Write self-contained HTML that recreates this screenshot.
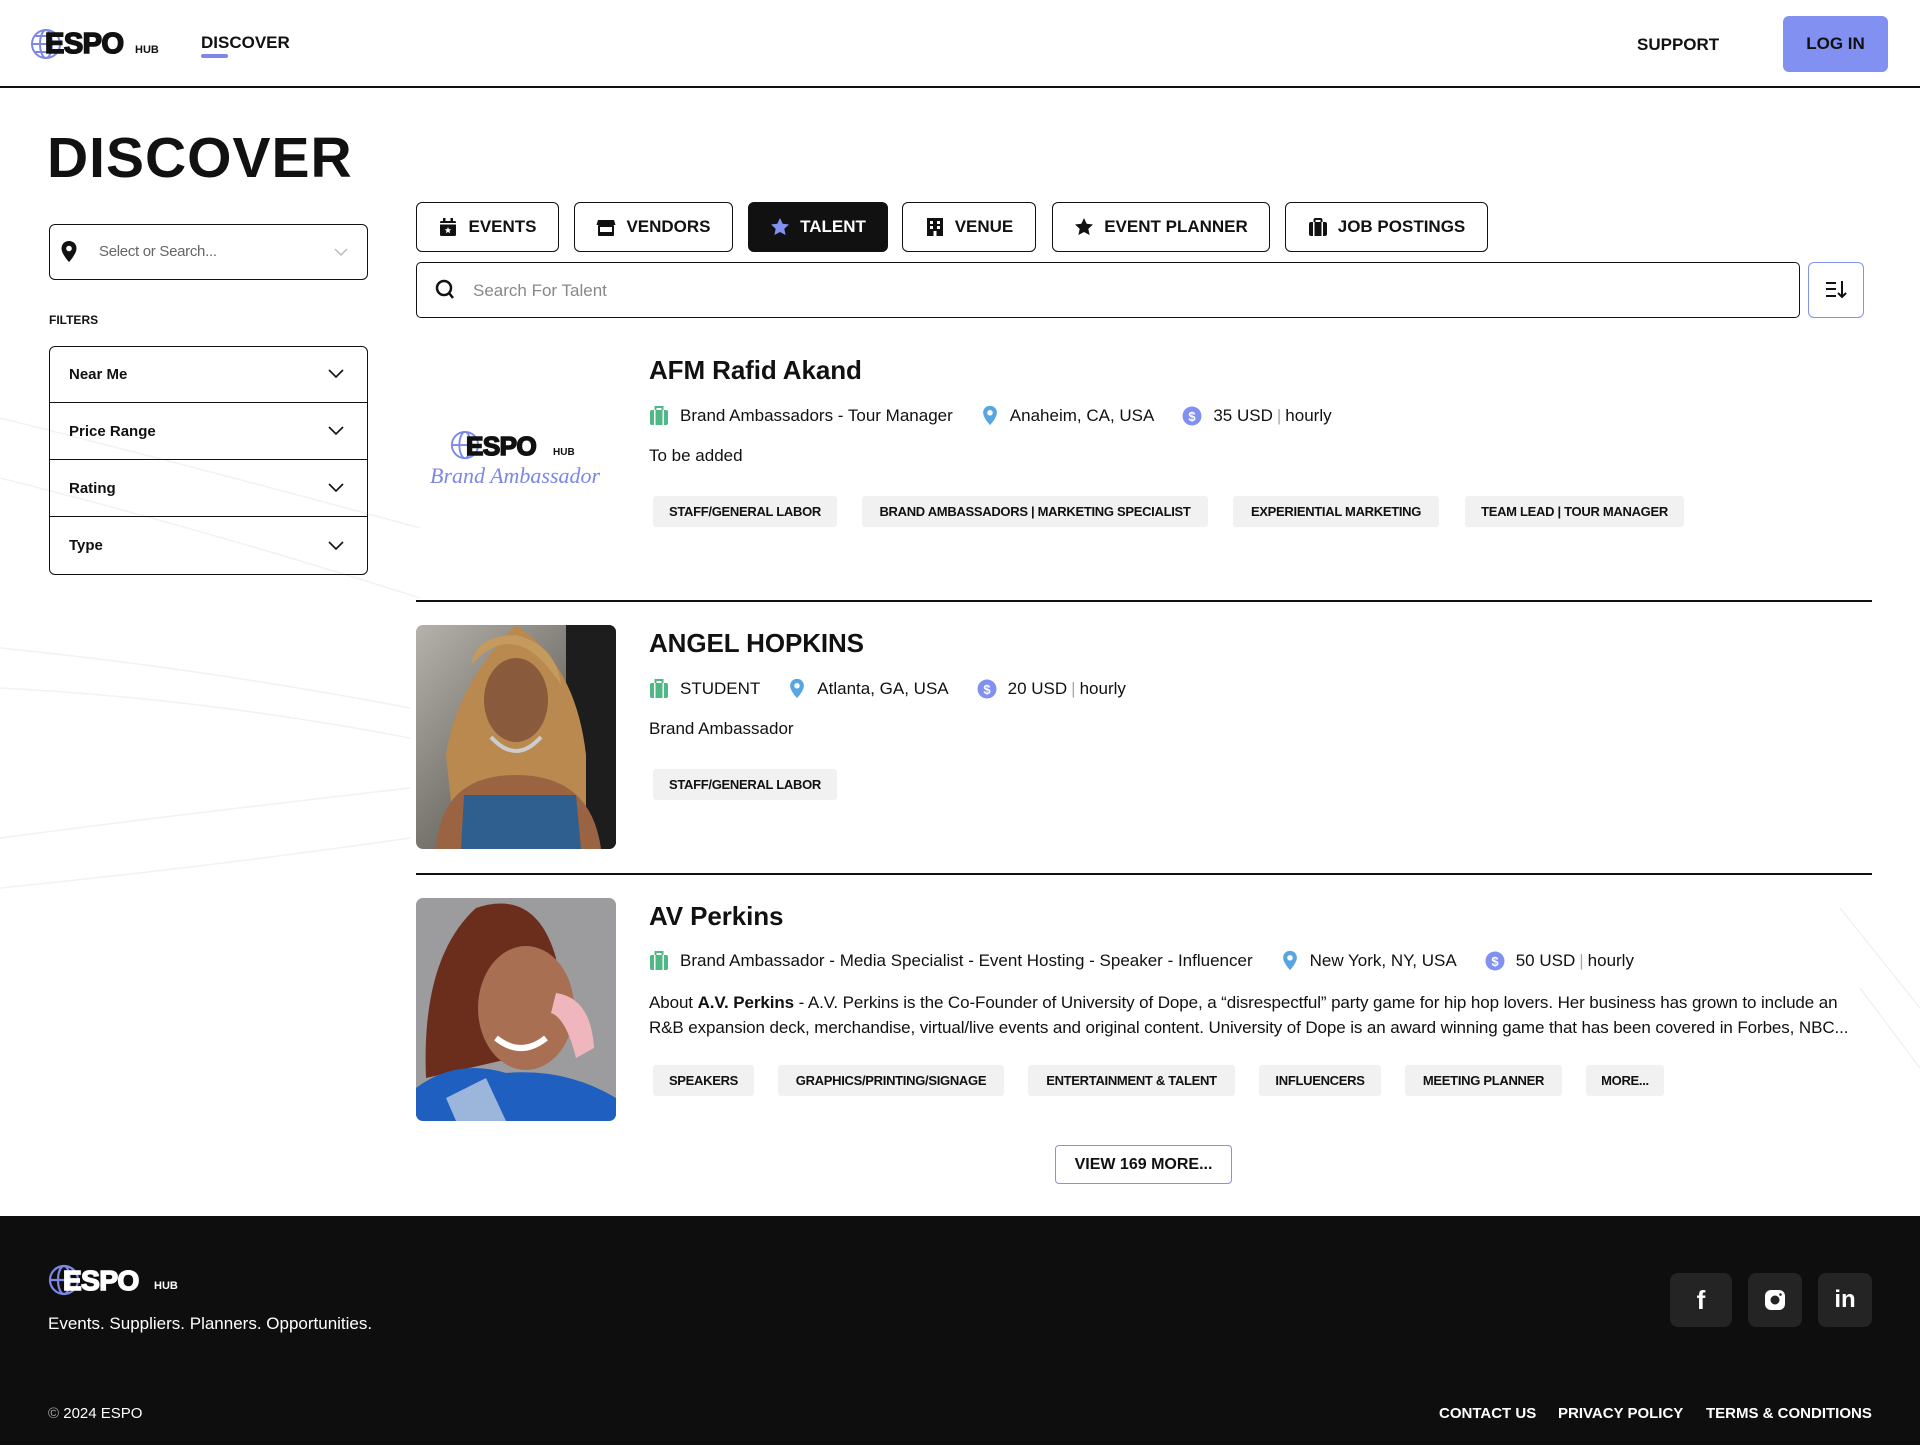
<!DOCTYPE html>
<html><head><meta charset="utf-8"><style>
*{box-sizing:border-box;margin:0;padding:0}
body{width:1920px;height:1446px;position:relative;background:#fff;font-family:"Liberation Sans",sans-serif;color:#111;overflow:hidden}
.a{position:absolute}
.b{font-weight:bold}
.tab{position:absolute;top:202px;height:50px;border:1.5px solid #111;border-radius:6px;display:flex;align-items:center;justify-content:center;gap:10px;font-weight:bold;font-size:17px;background:#fff}
.tab svg{width:20px;height:20px}
.frow{position:absolute;left:49px;width:319px;height:57px;border-bottom:1.5px solid #111;display:flex;align-items:center;justify-content:space-between;padding:0 24px 0 20px;font-weight:bold;font-size:15px}
.name{position:absolute;left:649px;font-size:26px;font-weight:bold;letter-spacing:-0.1px}
.meta{position:absolute;left:649px;font-size:17px;display:flex;align-items:center;white-space:nowrap;letter-spacing:0}
.meta svg{margin-right:11px}
.meta .g{margin-right:28px}
.sep{color:#aaa;margin:0 4px}
.desc{position:absolute;left:649px;font-size:17px}
.tag{position:absolute;height:31px;background:#f1f1f1;border-radius:3px;font-size:13px;font-weight:bold;display:flex;align-items:center;justify-content:center;letter-spacing:-0.3px;white-space:nowrap}
.hr{position:absolute;left:416px;width:1456px;height:1.5px;background:#111}
.photo{position:absolute;left:416px;width:200px;border-radius:7px;overflow:hidden}
.soc{position:absolute;top:1273px;height:54px;background:#242424;border-radius:8px;display:flex;align-items:center;justify-content:center;color:#fff;font-weight:bold;font-size:26px}
.fl{position:absolute;top:1405px;color:#fff;font-weight:bold;font-size:15px}
.logo{-webkit-text-stroke:1.6px currentColor;letter-spacing:-0.5px}
</style></head><body>
<svg class="a" style="left:0;top:88px" width="1920" height="1128"><g stroke="#f2f2f2" stroke-width="1.5" fill="none">
<path d="M0 330 Q200 380 420 440"/><path d="M0 390 Q200 440 420 510"/><path d="M0 560 Q200 580 410 620"/><path d="M0 600 Q200 610 410 650"/><path d="M0 750 Q150 730 410 700"/><path d="M0 800 Q200 780 410 750"/><path d="M1840 820 L1920 920"/><path d="M1860 900 L1920 980"/></g></svg>
<!-- header -->
<svg class="a" style="left:30px;top:28px" width="32" height="32" viewBox="0 0 32 32"><g fill="none" stroke="#7c87e8" stroke-width="2"><circle cx="16" cy="16" r="14"/><ellipse cx="16" cy="16" rx="6" ry="14"/><path d="M2 16h28M5 8h22M5 24h22"/></g></svg>
<div class="a b logo" style="left:45px;top:28px;font-size:29px">ESPO</div>
<div class="a b" style="left:135px;top:44px;font-size:11px">HUB</div>
<div class="a b" style="left:201px;top:33px;font-size:17px">DISCOVER</div>
<div class="a" style="left:201px;top:54px;width:27px;height:4px;border-radius:2px;background:#7c87e8"></div>
<div class="a b" style="left:1637px;top:35px;font-size:17px">SUPPORT</div>
<div class="a b" style="left:1783px;top:16px;width:105px;height:56px;background:#8290f2;border-radius:6px;display:flex;align-items:center;justify-content:center;font-size:17px">LOG IN</div>
<div class="a" style="left:0;top:86px;width:1920px;height:1.5px;background:#111"></div>
<!-- left -->
<div class="a b" style="left:47px;top:125px;font-size:57px;letter-spacing:1px">DISCOVER</div>
<div class="a" style="left:49px;top:224px;width:319px;height:56px;border:1.5px solid #111;border-radius:6px"></div>
<svg class="a" style="left:60px;top:240px" width="18" height="24" viewBox="0 0 18 24"><path d="M9 1C4.5 1 1.5 4.3 1.5 8.5 1.5 14 9 22 9 22s7.5-8 7.5-13.5C16.5 4.3 13.5 1 9 1z" fill="#111"/><circle cx="9" cy="8.5" r="2.8" fill="#fff"/></svg>
<div class="a" style="left:99px;top:243px;font-size:15px;color:#666;letter-spacing:-0.3px">Select or Search...</div>
<svg class="a" style="left:334px;top:247px" width="14" height="10"><path d="M1 2l6 6 6-6" stroke="#bbb" stroke-width="1.5" fill="none"/></svg>
<div class="a b" style="left:49px;top:313px;font-size:12px">FILTERS</div>
<div class="a" style="left:49px;top:346px;width:319px;height:229px;border:1.5px solid #111;border-radius:6px"></div>
<div class="frow" style="top:346px">Near Me<svg width="16" height="10"><path d="M1 1l7 7 7-7" stroke="#111" stroke-width="1.6" fill="none"/></svg></div>
<div class="frow" style="top:403px">Price Range<svg width="16" height="10"><path d="M1 1l7 7 7-7" stroke="#111" stroke-width="1.6" fill="none"/></svg></div>
<div class="frow" style="top:460px">Rating<svg width="16" height="10"><path d="M1 1l7 7 7-7" stroke="#111" stroke-width="1.6" fill="none"/></svg></div>
<div class="frow" style="top:517px;border-bottom:none">Type<svg width="16" height="10"><path d="M1 1l7 7 7-7" stroke="#111" stroke-width="1.6" fill="none"/></svg></div>
<!-- tabs -->
<div class="tab" style="left:416px;width:143px"><svg viewBox="0 0 20 20"><rect x="2" y="4" width="16" height="15" rx="1.5" fill="#111"/><rect x="5" y="1" width="2.5" height="4" fill="#111"/><rect x="12.5" y="1" width="2.5" height="4" fill="#111"/><rect x="2" y="6" width="16" height="1.5" fill="#fff"/><path d="M10 10l1 2.2 2.3.2-1.8 1.5.6 2.3-2.1-1.3-2.1 1.3.6-2.3-1.8-1.5 2.3-.2z" fill="#fff"/></svg>EVENTS</div>
<div class="tab" style="left:574px;width:159px"><svg viewBox="0 0 20 20"><path d="M2 3h16l1.5 5H.5z" fill="#111"/><rect x="2" y="8" width="16" height="11" rx="1" fill="#111"/><rect x="4" y="10" width="12" height="5" fill="#fff"/></svg>VENDORS</div>
<div class="tab" style="left:748px;width:140px;background:#111;color:#fff;border-color:#111"><svg viewBox="0 0 20 20"><path d="M10 1l2.7 5.8 6.3.7-4.7 4.3 1.3 6.2L10 15l-5.6 3 1.3-6.2L1 7.5l6.3-.7z" fill="#8290f2"/></svg>TALENT</div>
<div class="tab" style="left:902px;width:134px"><svg viewBox="0 0 20 20"><rect x="2" y="1" width="16" height="18" fill="#111"/><g fill="#fff"><rect x="5" y="4" width="3" height="3"/><rect x="12" y="4" width="3" height="3"/><rect x="5" y="9" width="3" height="3"/><rect x="12" y="9" width="3" height="3"/><rect x="8.5" y="14" width="3" height="5"/></g></svg>VENUE</div>
<div class="tab" style="left:1052px;width:218px"><svg viewBox="0 0 20 20"><path d="M10 1l2.7 5.8 6.3.7-4.7 4.3 1.3 6.2L10 15l-5.6 3 1.3-6.2L1 7.5l6.3-.7z" fill="#111"/></svg>EVENT PLANNER</div>
<div class="tab" style="left:1285px;width:203px"><svg viewBox="0 0 20 20"><rect x="1" y="5" width="18" height="14" rx="2" fill="#111"/><rect x="6.5" y="2" width="7" height="4" rx="1" fill="none" stroke="#111" stroke-width="2"/><rect x="5" y="5" width="1.5" height="14" fill="#fff"/><rect x="13.5" y="5" width="1.5" height="14" fill="#fff"/></svg>JOB POSTINGS</div>
<!-- search -->
<div class="a" style="left:416px;top:262px;width:1384px;height:56px;border:1.5px solid #111;border-radius:5px"></div>
<svg class="a" style="left:435px;top:279px" width="22" height="22"><circle cx="9" cy="9" r="7" stroke="#111" stroke-width="2.5" fill="none"/><path d="M14 14l4 5" stroke="#111" stroke-width="2.5"/></svg>
<div class="a" style="left:473px;top:281px;font-size:17px;color:#888">Search For Talent</div>
<div class="a" style="left:1808px;top:262px;width:56px;height:56px;border:1.5px solid #8290f2;border-radius:6px"></div>
<svg class="a" style="left:1825px;top:280px" width="24" height="20"><g stroke="#111" stroke-width="2"><path d="M1 3h10M1 9h10M1 16h10"/><path d="M17 1v16M13 13l4 4 4-4" fill="none"/></g></svg>
<!-- card1 -->
<svg class="a" style="left:450px;top:430px" width="30" height="30" viewBox="0 0 32 32"><g fill="none" stroke="#7c87e8" stroke-width="2"><circle cx="16" cy="16" r="14"/><ellipse cx="16" cy="16" rx="6" ry="14"/><path d="M2 16h28"/></g></svg>
<div class="a b logo" style="left:466px;top:431px;font-size:26px">ESPO</div>
<div class="a b" style="left:553px;top:447px;font-size:10px">HUB</div>
<div class="a" style="left:430px;top:463px;font-size:22px;color:#7c87e8;font-style:italic;font-family:'Liberation Serif',serif">Brand Ambassador</div>
<div class="name" style="top:355px">AFM Rafid Akand</div>
<div class="meta" style="top:405px"><svg width="20" height="20" viewBox="0 0 20 20"><rect x="1" y="4" width="18" height="15" rx="2" fill="#4fb886"/><rect x="6.5" y="1" width="7" height="4" fill="none" stroke="#4fb886" stroke-width="2"/><rect x="5" y="4" width="1.5" height="15" fill="#fff"/><rect x="13.5" y="4" width="1.5" height="15" fill="#fff"/></svg><span class="g">Brand Ambassadors - Tour Manager</span><svg width="18" height="22" viewBox="0 0 18 24"><path d="M9 1C4.5 1 1.5 4.3 1.5 8.5 1.5 14 9 22 9 22s7.5-8 7.5-13.5C16.5 4.3 13.5 1 9 1z" fill="#58a6e0"/><circle cx="9" cy="8.5" r="3" fill="#fff"/></svg><span class="g">Anaheim, CA, USA</span><svg width="20" height="20"><circle cx="10" cy="10" r="9.5" fill="#8290f2"/><text x="10" y="15" fill="#fff" font-size="13" font-weight="bold" text-anchor="middle" font-family="Liberation Sans">$</text></svg><span>35 USD<span class="sep">|</span>hourly</span></div>
<div class="desc" style="top:446px">To be added</div>
<div class="tag" style="left:653px;top:496px;width:184px">STAFF/GENERAL LABOR</div>
<div class="tag" style="left:862px;top:496px;width:346px">BRAND AMBASSADORS | MARKETING SPECIALIST</div>
<div class="tag" style="left:1233px;top:496px;width:206px">EXPERIENTIAL MARKETING</div>
<div class="tag" style="left:1465px;top:496px;width:219px">TEAM LEAD | TOUR MANAGER</div>
<div class="hr" style="top:600px"></div>
<!-- card2 -->
<svg class="photo" style="top:625px" width="200" height="224" viewBox="0 0 200 224"><defs><linearGradient id="bg2" x1="0" y1="0" x2="1" y2="1"><stop offset="0" stop-color="#b5b2ab"/><stop offset=".6" stop-color="#6d6a64"/><stop offset="1" stop-color="#222"/></linearGradient></defs><rect width="200" height="224" fill="url(#bg2)"/><rect x="150" y="0" width="50" height="224" fill="#1d1d1d"/><path d="M40 224 L30 130 Q40 60 100 0 Q160 40 170 130 L170 224z" fill="#b9894f"/><path d="M20 224 Q25 150 100 150 Q175 150 185 224z" fill="#9a6443"/><ellipse cx="100" cy="75" rx="32" ry="42" fill="#8a5a3c"/><path d="M48 170 H160 L165 224 H45z" fill="#2f5f8f"/><path d="M75 112 Q100 140 125 112" stroke="#ccc" stroke-width="4" fill="none"/><path d="M55 40 Q100 -10 145 60 Q140 20 100 10 Q60 10 55 40z" fill="#c49a5e"/></svg>
<div class="name" style="top:628px">ANGEL HOPKINS</div>
<div class="meta" style="top:678px"><svg width="20" height="20" viewBox="0 0 20 20"><rect x="1" y="4" width="18" height="15" rx="2" fill="#4fb886"/><rect x="6.5" y="1" width="7" height="4" fill="none" stroke="#4fb886" stroke-width="2"/><rect x="5" y="4" width="1.5" height="15" fill="#fff"/><rect x="13.5" y="4" width="1.5" height="15" fill="#fff"/></svg><span class="g">STUDENT</span><svg width="18" height="22" viewBox="0 0 18 24"><path d="M9 1C4.5 1 1.5 4.3 1.5 8.5 1.5 14 9 22 9 22s7.5-8 7.5-13.5C16.5 4.3 13.5 1 9 1z" fill="#58a6e0"/><circle cx="9" cy="8.5" r="3" fill="#fff"/></svg><span class="g">Atlanta, GA, USA</span><svg width="20" height="20"><circle cx="10" cy="10" r="9.5" fill="#8290f2"/><text x="10" y="15" fill="#fff" font-size="13" font-weight="bold" text-anchor="middle" font-family="Liberation Sans">$</text></svg><span>20 USD<span class="sep">|</span>hourly</span></div>
<div class="desc" style="top:719px">Brand Ambassador</div>
<div class="tag" style="left:653px;top:769px;width:184px">STAFF/GENERAL LABOR</div>
<div class="hr" style="top:873px"></div>
<!-- card3 -->
<svg class="photo" style="top:898px" width="200" height="223" viewBox="0 0 200 223"><rect width="200" height="223" fill="#9c9c9e"/><path d="M10 180 Q5 60 60 10 Q120 -10 140 60 L140 150 Z" fill="#6b2e1c"/><ellipse cx="110" cy="110" rx="48" ry="62" fill="#a86f52"/><path d="M0 223 L0 190 Q40 160 90 175 Q150 170 200 200 L200 223z" fill="#1e5fbf"/><path d="M30 200 L70 180 L90 223 L40 223z" fill="#eee" opacity=".6"/><path d="M140 95 Q175 100 178 150 L160 160 Q150 120 135 115z" fill="#f0b6bd"/><path d="M80 140 Q105 160 130 140" stroke="#fff" stroke-width="6" fill="none"/></svg>
<div class="name" style="top:901px">AV Perkins</div>
<div class="meta" style="top:950px"><svg width="20" height="20" viewBox="0 0 20 20"><rect x="1" y="4" width="18" height="15" rx="2" fill="#4fb886"/><rect x="6.5" y="1" width="7" height="4" fill="none" stroke="#4fb886" stroke-width="2"/><rect x="5" y="4" width="1.5" height="15" fill="#fff"/><rect x="13.5" y="4" width="1.5" height="15" fill="#fff"/></svg><span class="g">Brand Ambassador - Media Specialist - Event Hosting - Speaker - Influencer</span><svg width="18" height="22" viewBox="0 0 18 24"><path d="M9 1C4.5 1 1.5 4.3 1.5 8.5 1.5 14 9 22 9 22s7.5-8 7.5-13.5C16.5 4.3 13.5 1 9 1z" fill="#58a6e0"/><circle cx="9" cy="8.5" r="3" fill="#fff"/></svg><span class="g">New York, NY, USA</span><svg width="20" height="20"><circle cx="10" cy="10" r="9.5" fill="#8290f2"/><text x="10" y="15" fill="#fff" font-size="13" font-weight="bold" text-anchor="middle" font-family="Liberation Sans">$</text></svg><span>50 USD<span class="sep">|</span>hourly</span></div>
<div class="desc" style="top:990px;width:1225px;line-height:25px;font-size:17px;letter-spacing:-0.1px;white-space:nowrap;overflow:hidden">About <b>A.V. Perkins</b> - A.V. Perkins is the Co-Founder of University of Dope, a “disrespectful” party game for hip hop lovers. Her business has grown to include an<br>R&amp;B expansion deck, merchandise, virtual/live events and original content. University of Dope is an award winning game that has been covered in Forbes, NBC...</div>
<div class="tag" style="left:653px;top:1065px;width:101px">SPEAKERS</div>
<div class="tag" style="left:778px;top:1065px;width:226px">GRAPHICS/PRINTING/SIGNAGE</div>
<div class="tag" style="left:1028px;top:1065px;width:207px">ENTERTAINMENT &amp; TALENT</div>
<div class="tag" style="left:1259px;top:1065px;width:122px">INFLUENCERS</div>
<div class="tag" style="left:1405px;top:1065px;width:157px">MEETING PLANNER</div>
<div class="tag" style="left:1586px;top:1065px;width:78px">MORE...</div>
<div class="a b" style="left:1055px;top:1145px;width:177px;height:39px;border:1.5px solid #8290f2;border-radius:4px;display:flex;align-items:center;justify-content:center;font-size:16px">VIEW 169 MORE...</div>
<!-- footer -->
<div class="a" style="left:0;top:1216px;width:1920px;height:229px;background:#0e0e0e"></div>
<svg class="a" style="left:48px;top:1264px" width="32" height="32" viewBox="0 0 32 32"><g fill="none" stroke="#7c87e8" stroke-width="2.2"><circle cx="16" cy="16" r="14"/><ellipse cx="16" cy="16" rx="6" ry="14"/><path d="M2 16h28"/></g></svg>
<div class="a b logo" style="left:63px;top:1265px;font-size:28px;color:#fff">ESPO</div>
<div class="a b" style="left:154px;top:1280px;font-size:11px;color:#fff">HUB</div>
<div class="a" style="left:48px;top:1314px;font-size:17px;color:#fff">Events. Suppliers. Planners. Opportunities.</div>
<div class="a" style="left:48px;top:1405px;font-size:15px;color:#fff"><span style="color:#aaa">©</span> 2024 ESPO</div>
<div class="soc" style="left:1670px;width:62px">f</div>
<div class="soc" style="left:1748px;width:54px"><svg width="22" height="22"><rect x="1" y="1" width="20" height="20" rx="6" fill="#fff"/><circle cx="11" cy="11" r="4.5" fill="#242424"/><circle cx="16.5" cy="5.5" r="1.3" fill="#242424"/></svg></div>
<div class="soc" style="left:1818px;width:54px;font-size:24px">in</div>
<div class="fl" style="left:1439px">CONTACT US</div>
<div class="fl" style="left:1558px">PRIVACY POLICY</div>
<div class="fl" style="left:1706px">TERMS &amp; CONDITIONS</div>
</body></html>
